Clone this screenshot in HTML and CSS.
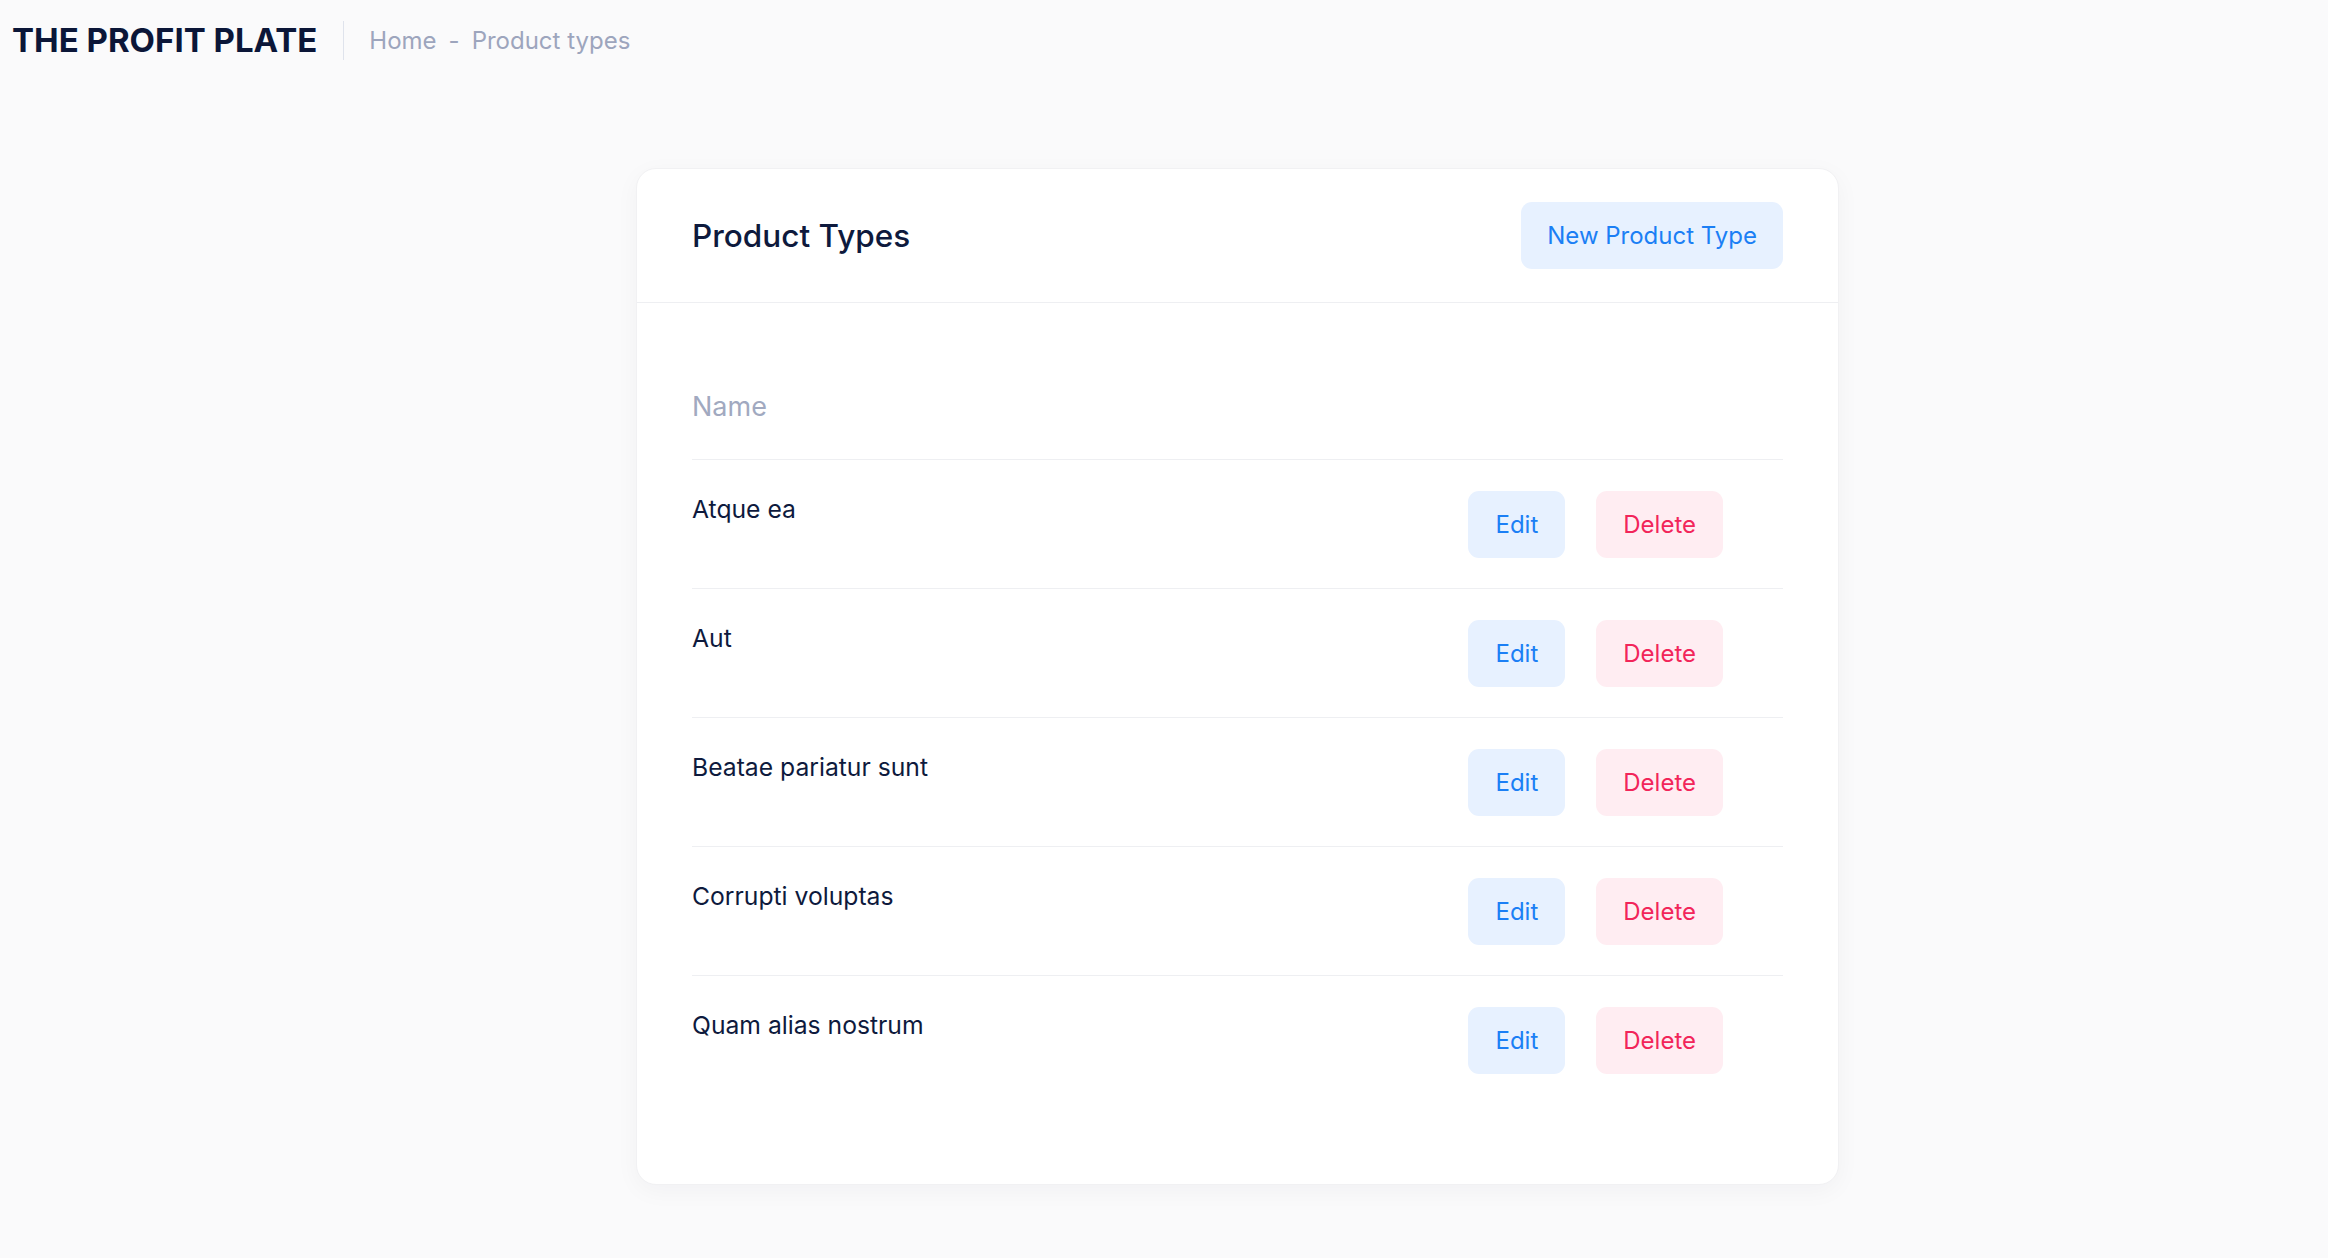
FILE: index.html
```html
<!DOCTYPE html>
<html lang="en">
<head>
<meta charset="utf-8">
<title>Product types - The Profit Plate</title>
<link rel="stylesheet" href="styles.css">
</head>
<body>
<header class="topbar">
  <div class="logo">THE PROFIT PLATE</div>
  <div class="divider"></div>
  <nav class="crumbs">
    <a class="crumb" href="#">Home</a>
    <span class="crumb-sep">-</span>
    <span class="crumb">Product types</span>
  </nav>
</header>
<main class="main">
  <section class="card">
    <div class="card-head">
      <h1 class="card-title">Product Types</h1>
      <button class="btn btn-blue">New Product Type</button>
    </div>
    <div class="card-body">
      <table class="table">
        <thead>
          <tr><th class="th">Name</th><th class="th"></th></tr>
        </thead>
        <tbody>
          <tr class="row"><td class="cell">Atque ea</td><td class="cell actions"><div class="btns"><button class="btn btn-blue">Edit</button><button class="btn btn-red">Delete</button></div></td></tr>
          <tr class="row"><td class="cell">Aut</td><td class="cell actions"><div class="btns"><button class="btn btn-blue">Edit</button><button class="btn btn-red">Delete</button></div></td></tr>
          <tr class="row"><td class="cell">Beatae pariatur sunt</td><td class="cell actions"><div class="btns"><button class="btn btn-blue">Edit</button><button class="btn btn-red">Delete</button></div></td></tr>
          <tr class="row"><td class="cell">Corrupti voluptas</td><td class="cell actions"><div class="btns"><button class="btn btn-blue">Edit</button><button class="btn btn-red">Delete</button></div></td></tr>
          <tr class="row"><td class="cell">Quam alias nostrum</td><td class="cell actions"><div class="btns"><button class="btn btn-blue">Edit</button><button class="btn btn-red">Delete</button></div></td></tr>
        </tbody>
      </table>
    </div>
  </section>
</main>
</body>
</html>
```
FILE: styles.css
```css
* { box-sizing: border-box; }
html, body { margin: 0; padding: 0; }
body {
  background: #fafafb;
  font-family: Inter, "Noto Sans", sans-serif;
  color: #0e1a3d;
  min-height: 1258px;
}
.topbar {
  display: flex;
  align-items: center;
  height: 80px;
  padding-left: 12px;
}
.logo {
  font-size: 33px;
  font-weight: 700;
  color: #0b1638;
}
.divider {
  width: 1px;
  height: 39px;
  background: #dfe3ec;
  margin: 0 25px 0 26px;
}
.crumbs {
  display: flex;
  align-items: center;
  font-size: 24px;
  color: #9da5bd;
}
.crumb { color: #9da5bd; text-decoration: none; }
.crumb-sep { margin: 0 12px; }
.main {
  padding: 88px 0 0 636px;
}
.card {
  width: 1203px;
  background: #fff;
  border: 1px solid #f1f1f3;
  border-radius: 20px;
  box-shadow: 0 6px 24px rgba(20, 20, 40, 0.04);
}
.card-head {
  display: flex;
  align-items: center;
  justify-content: space-between;
  height: 134px;
  padding: 0 55px;
  border-bottom: 1px solid #eeeff2;
}
.card-title {
  margin: 0;
  font-size: 31.5px;
  font-weight: 500;
  color: #0e1a3d;
}
.btn {
  display: inline-flex;
  align-items: center;
  justify-content: center;
  height: 67px;
  padding: 0 27px;
  border: none;
  border-radius: 11px;
  font-family: Inter, "Noto Sans", sans-serif;
  font-size: 24px;
  font-weight: 400;
  cursor: pointer;
}
.card-head .btn { padding: 0 26px; }
.btn-blue { background: #e7f1ff; color: #1b7ff5; }
.btn-red { background: #ffedf2; color: #f2255a; }
.card-body {
  padding: 52px 55px 80px;
}
.table {
  width: 100%;
  border-collapse: collapse;
}
.th {
  text-align: left;
  font-size: 27px;
  font-weight: 400;
  color: #a1a9c0;
  padding: 32px 0;
  line-height: 40px;
}
.row { border-top: 1px solid #eeeff2; }
.cell {
  vertical-align: top;
  padding: 30.5px 0;
  font-size: 24.7px;
  line-height: 36px;
  color: #0e1a3d;
}
.actions { width: 1px; padding-right: 60px; }
.btns { display: flex; gap: 31px; }
```
